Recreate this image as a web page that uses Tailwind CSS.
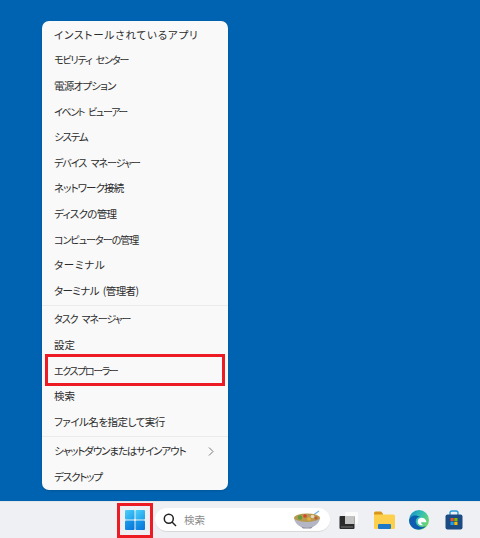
<!DOCTYPE html>
<html lang="ja">
<head>
  <meta charset="UTF-8" />
  <script src="https://cdn.jsdelivr.net/npm/@tailwindcss/browser@4"></script>
  <title>クイック リンク メニュー</title>
</head>
<body class="w-[480px] h-[538px] overflow-hidden bg-[#0063b1] font-['Noto_Sans_CJK_JP',sans-serif]">
  <div class="relative flex flex-col h-[538px]">
    <!-- desktop + menu -->
    <div class="flex-1 pl-[42px] pt-[21px]">
      <div class="w-[186px] h-[469px] bg-[#f9f9f9] rounded-[7px] text-[10.5px] leading-[16px] whitespace-nowrap text-[#2b2b2b] [font-feature-settings:'palt'] shadow-sm">
        <div class="pt-[1px] pb-[1px] flex flex-col">
          <div class="h-[25.6px] flex items-center pl-[12px] tracking-[0.85px]">インストールされているアプリ</div>
          <div class="h-[25.6px] flex items-center pl-[12px] text-[10px] tracking-[-1.1px] [word-spacing:3px]">モビリティ センター</div>
          <div class="h-[25.6px] flex items-center pl-[12px] tracking-[-0.8px]">電源オプション</div>
          <div class="h-[25.6px] flex items-center pl-[12px] text-[10px] tracking-[-1.35px] [word-spacing:3px]">イベント ビューアー</div>
          <div class="h-[25.6px] flex items-center pl-[12px] tracking-[-1.2px]">システム</div>
          <div class="h-[25.6px] flex items-center pl-[12px] text-[10px] tracking-[-1px] [word-spacing:3px]">デバイス マネージャー</div>
          <div class="h-[25.6px] flex items-center pl-[12px] tracking-[-0.9px]">ネットワーク接続</div>
          <div class="h-[25.6px] flex items-center pl-[12px] tracking-[-0.7px]">ディスクの管理</div>
          <div class="h-[25.6px] flex items-center pl-[12px] text-[10px] tracking-[-1px]">コンピューターの管理</div>
          <div class="h-[25.6px] flex items-center pl-[12px] tracking-[0.7px]">ターミナル</div>
          <div class="h-[25.6px] flex items-center pl-[12px] tracking-[-0.6px] [word-spacing:2px]">ターミナル (管理者)</div>
        </div>
        <div class="border-t border-[#ebebeb] pt-[1px] pb-[1px] flex flex-col">
          <div class="h-[25.6px] flex items-center pl-[12px] text-[10px] tracking-[-1.1px] [word-spacing:3px]">タスク マネージャー</div>
          <div class="h-[25.6px] flex items-center pl-[12px]">設定</div>
          <div class="h-[25.6px] flex items-center pl-[12px] text-[10px] tracking-[-1.4px]">エクスプローラー</div>
          <div class="h-[25.6px] flex items-center pl-[12px]">検索</div>
          <div class="h-[25.6px] flex items-center pl-[12px] tracking-[-0.5px]">ファイル名を指定して実行</div>
        </div>
        <div class="border-t border-[#ebebeb] pt-[2px] flex flex-col">
          <div class="h-[25.6px] flex items-center justify-between pl-[12px] pr-[14px]">
            <span class="tracking-[-1.1px]">シャットダウンまたはサインアウト</span>
            <svg width="6" height="9" viewBox="0 0 6 9" fill="none" stroke="#777" stroke-width="1"><path d="M1 0.5 L5 4.5 L1 8.5"/></svg>
          </div>
          <div class="h-[25.6px] flex items-center pl-[12px] tracking-[-1.15px]">デスクトップ</div>
        </div>
      </div>
    </div>

    <!-- taskbar -->
    <div class="h-[37px] bg-[#eef0f3] border-t border-[#e2e4e8] flex items-center pl-[125px]">
      <svg width="20" height="20" viewBox="0 0 20 20">
        <defs>
          <linearGradient id="w1" x1="0" y1="0" x2="1" y2="1"><stop offset="0" stop-color="#4fd0f8"/><stop offset="1" stop-color="#1a9fec"/></linearGradient>
          <linearGradient id="w2" x1="0" y1="0" x2="1" y2="1"><stop offset="0" stop-color="#1a9fec"/><stop offset="1" stop-color="#0b74d8"/></linearGradient>
        </defs>
        <rect x="0" y="0" width="9.5" height="9.5" rx="1" fill="url(#w1)"/>
        <rect x="10.5" y="0" width="9.5" height="9.5" rx="1" fill="url(#w1)"/>
        <rect x="0" y="10.5" width="9.5" height="9.5" rx="1" fill="url(#w2)"/>
        <rect x="10.5" y="10.5" width="9.5" height="9.5" rx="1" fill="url(#w2)"/>
      </svg>
      <div class="ml-[10px] w-[175px] h-[24px] rounded-full bg-white border-b border-[#d8d8d8] flex items-center pl-[8px] pr-[9px]">
        <svg width="14" height="14" viewBox="0 0 14 14" fill="none" stroke="#222" stroke-width="1.5"><circle cx="5.8" cy="5.8" r="4.5"/><path d="M9 9 L13 13"/></svg>
        <span class="ml-[7px] text-[10.5px] text-[#8a8a8a]">検索</span>
        <svg class="ml-auto" width="28" height="20" viewBox="0 0 28 20">
          <path d="M19 6 L26 1" stroke="#7fb6dc" stroke-width="1.4"/>
          <ellipse cx="14" cy="8" rx="13" ry="4.5" fill="#b89a4e"/>
          <circle cx="7" cy="7.5" r="2.2" fill="#5f9e3c"/>
          <circle cx="12" cy="6" r="1.8" fill="#d8452f"/>
          <circle cx="16" cy="9" r="1.8" fill="#e6b13c"/>
          <circle cx="19.5" cy="6.5" r="1.8" fill="#e6d8c0"/>
          <circle cx="23" cy="8" r="1.5" fill="#c9553c"/>
          <path d="M1 9 C3 15 8 18 14 18 C20 18 25 15 27 9 C20 13 8 13 1 9 Z" fill="#b4b6c6"/>
          <path d="M8 16.5 C11 18 17 18 20 16.5 L18 18.5 H10 Z" fill="#85879a"/>
        </svg>
      </div>
      <!-- task view -->
      <svg class="ml-[9px]" width="20" height="18" viewBox="0 0 20 18">
        <rect x="6" y="1" width="13" height="12" rx="1" fill="#fbfbfb"/>
        <rect x="0.5" y="5" width="15" height="13" rx="1" fill="#2b2b2b"/>
        <rect x="6" y="5" width="9.5" height="8" fill="#c4c4c4"/>
        <rect x="2" y="15.5" width="12" height="1" fill="#777"/>
      </svg>
      <!-- explorer -->
      <svg class="ml-[15px]" width="21" height="18" viewBox="0 0 21 18">
        <path d="M0 2 Q0 0.5 1.5 0.5 H7 L9 2.5 V5 H0 Z" fill="#d9961c"/>
        <path d="M0 3.5 H19.5 Q21 3.5 21 5 V16.5 Q21 18 19.5 18 H1.5 Q0 18 0 16.5 Z" fill="#fccf4d"/>
        <rect x="4" y="13" width="13" height="5" rx="1" fill="#1e78c8"/>
      </svg>
      <!-- edge -->
      <svg class="ml-[14px]" width="20" height="20" viewBox="0 0 20 20">
        <defs>
          <linearGradient id="e" x1="0" y1="0" x2="1" y2="0.6"><stop offset="0" stop-color="#1487cf"/><stop offset="0.55" stop-color="#35c1b0"/><stop offset="1" stop-color="#6fd66a"/></linearGradient>
        </defs>
        <circle cx="10" cy="10" r="10" fill="url(#e)"/>
        <path d="M0.1 10.5 C1 5.5 7 4 11 7 C7.5 7 6 10 7 13 C8.3 16.5 12.5 18 17 16 C13 21 1 21.5 0.1 10.5 Z" fill="#0e5db0"/>
        <path d="M17.5 12.2 C17 9 14.5 7.5 12 7.8 C9.3 8.3 8 11 9.2 13.4 C10.3 15.2 12.8 15.8 14.6 15 C13 14.6 12 13.6 12.2 12.2 Z" fill="#fff"/>
      </svg>
      <!-- store -->
      <svg class="ml-[16px]" width="18" height="20" viewBox="0 0 18 20">
        <path d="M5 5 V3 Q5 1 7 1 H11 Q13 1 13 3 V5" fill="none" stroke="#2a9bd8" stroke-width="1.4"/>
        <rect x="0.5" y="4.5" width="17" height="15" rx="2" fill="#1c4a82"/>
        <rect x="5.5" y="8" width="3.2" height="3.2" fill="#e8552d"/>
        <rect x="9.3" y="8" width="3.2" height="3.2" fill="#7fb900"/>
        <rect x="5.5" y="11.8" width="3.2" height="3.2" fill="#1aa1e8"/>
        <rect x="9.3" y="11.8" width="3.2" height="3.2" fill="#fcb900"/>
      </svg>
    </div>

    <!-- red callouts -->
    <div class="absolute left-[45px] top-[354px] w-[180px] h-[32px] border-[3px] border-[#ed1c24]"></div>
    <div class="absolute left-[117px] top-[503px] w-[36px] h-[35px] border-[3px] border-[#ed1c24]"></div>
  </div>
</body>
</html>
